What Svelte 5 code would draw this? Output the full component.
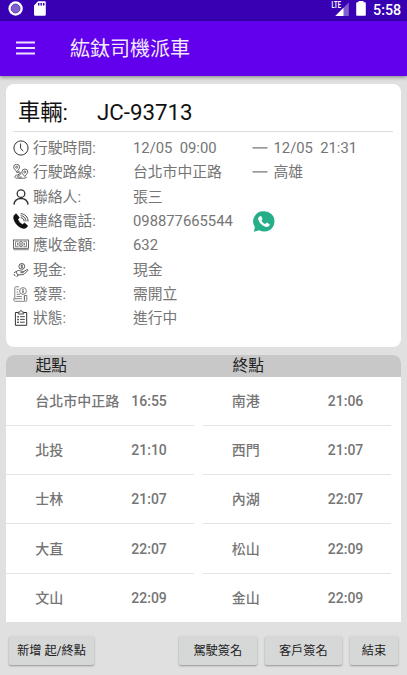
<script lang="ts">
  type Stop = { place: string; time: string };

  const details = [
    { icon: "clock", label: "行駛時間:", value: "12/05  09:00", to: "12/05  21:31" },
    { icon: "route", label: "行駛路線:", value: "台北市中正路", to: "高雄" },
    { icon: "person", label: "聯絡人:", value: "張三" },
    { icon: "phone", label: "連絡電話:", value: "098877665544", chat: true },
    { icon: "money", label: "應收金額:", value: "632" },
    { icon: "hand", label: "現金:", value: "現金" },
    { icon: "invoice", label: "發票:", value: "需開立" },
    { icon: "status", label: "狀態:", value: "進行中" },
  ];

  const starts: Stop[] = [
    { place: "台北市中正路", time: "16:55" },
    { place: "北投", time: "21:10" },
    { place: "士林", time: "21:07" },
    { place: "大直", time: "22:07" },
    { place: "文山", time: "22:09" },
  ];

  const ends: Stop[] = [
    { place: "南港", time: "21:06" },
    { place: "西門", time: "21:07" },
    { place: "內湖", time: "22:07" },
    { place: "松山", time: "22:09" },
    { place: "金山", time: "22:09" },
  ];
</script>

{#snippet stopList(stops: Stop[])}
  <ul class="stops">
    {#each stops as stop}
      <li><span class="place">{stop.place}</span><span>{stop.time}</span></li>
    {/each}
  </ul>
{/snippet}

<div class="screen">
  <div class="status-bar">
    <svg class="record" width="16" height="16" viewBox="0 0 16 16">
      <circle cx="7.600" cy="7.500" r="7.200" fill="#fff" />
      <circle cx="7.600" cy="7.500" r="4.400" fill="#8060cc" stroke="#5b35b8" stroke-width="1" />
    </svg>
    <svg class="sd" width="12" height="15" viewBox="0 0 12 15">
      <path d="M4 0.3h6.6a1.2 1.2 0 0 1 1.2 1.2v12a1.2 1.2 0 0 1-1.2 1.2H1.2A1.2 1.2 0 0 1 0 13.500V4.400z" fill="#fff" />
      <path d="M4.700 2v2.500M7.200 2v2.500M9.700 2v2.500" stroke="#3700b3" stroke-width="1.500" />
    </svg>
    <svg class="signal" width="19" height="16" viewBox="0 0 19 16">
      <path d="M17.800 1.500V15H4.300z" fill="#8060cc" />
      <path d="M12.500 6.800V15H4.300z" fill="#fff" />
      <text x="0.500" y="7" textLength="9.500" lengthAdjust="spacingAndGlyphs">LTE</text>
    </svg>
    <svg class="battery" width="10" height="15" viewBox="0 0 10 15">
      <path d="M2.500 0h5v1.300H9a.8.8 0 0 1 .8.8V14a.8.8 0 0 1-.8.8H1a.8.8 0 0 1-.8-.8V2.100a.8.8 0 0 1 .8-.8h1.500z" fill="#fff" />
    </svg>
    <span class="time">5:58</span>
  </div>

  <header>
    <svg width="19" height="14" viewBox="0 0 19 14" stroke="#ece0fd" stroke-width="1.900">
      <path d="M0 1.500h19M0 7h19M0 12.500h19" />
    </svg>
    <h1>紘鈦司機派車</h1>
  </header>

  <main>
    <section class="card trip">
      <h2><span>車輛:</span><span>JC-93713</span></h2>
      {#each details as d}
        <div class="detail">
          <svg class="icon" viewBox="0 0 16 16" fill="none" stroke="#333" stroke-width="1">
            {#if d.icon === "clock"}
              <circle cx="8" cy="8" r="7.100" />
              <path d="M7.600 3.500v4.700l2.600 3" />
            {:else if d.icon === "route"}
              <g stroke="#555" stroke-width="0.900">
                <path d="M3.700 7.800C1.800 5.300.7 4.500.7 3.200a2.900 2.900 0 0 1 5.900 0c0 1.300-1.100 2.100-2.900 4.600z" />
                <circle cx="3.700" cy="3.200" r="1" />
                <path d="M11.800 12.500C9.900 10 8.900 9.300 8.900 8a2.900 2.900 0 0 1 5.900 0c0 1.300-1.100 2-3 4.500z" />
                <circle cx="11.800" cy="8" r="1" />
                <path d="M3.300 8.300c3 .2 4.400 1 3 2-1.400.8-4.500.8-4.500 2.500 0 1.600 3 1.500 6.500 1.500 3 0 5.500-.2 5.300-1.500M4.800 7.500c3 .5 4 2 2 3.500-1.500 1-2.500 1-2.200 1.700.3.600 2.200.4 4.300.4" />
              </g>
            {:else if d.icon === "person"}
              <g stroke-width="1.300">
                <circle cx="8" cy="4.700" r="3.800" />
                <path d="M1 15.600c.4-4 3.100-6.100 7-6.100s6.600 2.100 7 6.100" />
              </g>
            {:else if d.icon === "phone"}
              <path d="M3.300.7C1.200 1.500.2 3.500.7 5.800c1.100 4.600 4.700 8.300 9 9.500 2.100.5 4.200-.4 5-2.500L11.600 10 9.500 11.400C7.500 10.700 5.600 8.400 4.900 6.500L6.300 4.500z" fill="#111" stroke="#111" stroke-width=".5" />
              <path d="M7.700 4.700c2 .2 3.300 1.500 3.500 3.600M7.700 2.700c3 .1 5.200 2.500 5.400 5.700M7.700.7c4.200.1 7.200 3.300 7.400 7.700" stroke-width=".9" />
            {:else if d.icon === "money"}
              <g stroke="#555">
                <rect x=".5" y="3" width="15" height="8.300" stroke-width=".9" />
                <path d="M2.500 4.700h3M10.500 4.700h3M2.500 9.700h3M10.500 9.700h3M2.500 4.700v5M13.500 4.700v5M4.500 6v2.500M11.500 6v2.500" stroke-width=".7" />
                <ellipse cx="8" cy="7.100" rx="2.100" ry="2.700" stroke-width=".8" />
                <path d="M8 5.500v3.300" />
                <path d="M.3 12.700h15.400" stroke="#888" />
              </g>
            {:else if d.icon === "hand"}
              <g stroke="#444" stroke-width=".9">
                <circle cx="8.800" cy="4.400" r="2.900" />
                <path d="M9.800 3.400c-.8-.6-2-.3-1.800.4.200.7 1.700.5 1.700 1.300 0 .7-1.300.8-1.900.2M8.800 2.600v3.700" stroke-width=".7" />
                <path d="M3 10c1.500-1.900 3.200-1.800 4.900-.9l2.200.2c.8.200.6 1.200-.2 1.300l-2.400.1M10.500 9.800l3.200-2.100c.9-.5 1.600.3 1 .9l-3.600 3.600c-.7.600-4.200.5-5.500.7L4.200 14" />
                <path d="M.9 11l1.900-1.300 2.400 3.600-1.700 1.300M.8 12l1.500 2.200" />
              </g>
            {:else if d.icon === "invoice"}
              <g stroke="#666" stroke-width=".8">
                <path d="M6 .8H2.900c-.9 0-1.100.5-1.100 1.300v10.700H.7c0 1.700.4 2.500 1.600 2.500h9.300M9 12.700h-7M11.300 9.500v4.300" />
                <circle cx="10" cy="5" r="3.400" />
                <path d="M10 2.800v4.300M9 3.900h1.500M9 6h2M3.600 3.400h2M3.600 6h1.700M3.600 8.300H7M3.600 10.500h5.200" />
                <path d="M11.500 9.500h2.300v5c0 1.200-2.300 1.200-2.300 0z" />
              </g>
            {:else}
              <path d="M5 2.500H2.400v12.800h11.300V2.500H11" />
              <path d="M5.300 4h5.400V2.100H9.200C9 .9 8.700.6 8 .6s-1 .3-1.200 1.500H5.300z" stroke-width=".9" />
              <path d="M4.300 6.700h1.500M4.300 9.400h1.500M4.300 12.200h1.500" stroke-width="1.500" />
              <path d="M7 6.700h4.800M7 9.400h4.800M7 12.200h4.800" stroke-width=".9" />
            {/if}
          </svg>
          <span class="label">{d.label}</span>
          <span class="value">{d.value}</span>
          {#if d.to}
            <svg class="dash" width="16" height="4" viewBox="0 0 16 4">
              <path d="M0.500 1.900h15" stroke="#757575" stroke-width="1.400" />
            </svg>
            <span class="to">{d.to}</span>
          {/if}
          {#if d.chat}
            <svg class="whatsapp" width="22" height="21" viewBox="0 0 22 21">
              <path d="M10.800.2A10.200 10.200 0 0 1 21.500 10.300 10.300 10.300 0 0 1 6.200 19.300L.8 20.800l1.100-4.700A10.200 10.200 0 0 1 10.800.2z" fill="#25ae88" />
              <path d="M6.300 5.400C4.900 6.500 4.900 8 5.600 9.500c1.500 3.500 4.500 5.900 8 6.400 1.600.1 2.900-.9 3.200-2.600l-3-1.700-1.600 1.500C10.300 12.300 9 10.900 8.500 9.400l1.100-1.500L8.100 5z" fill="#fff" />
            </svg>
          {/if}
        </div>
      {/each}
    </section>

    <section class="card table">
      <div class="table-head"><span>起點</span><span>終點</span></div>
      <div class="lists">
        {@render stopList(starts)}
        {@render stopList(ends)}
      </div>
    </section>
  </main>

  <footer>
    <button class="add">新增 起/終點</button>
    <button class="sign">駕駛簽名</button>
    <button class="sign">客戶簽名</button>
    <button class="finish">結束</button>
  </footer>
</div>

<style>
  :global(body) { background: #e0e0e0; }
  .screen {
    width: 407px;
    height: 675px;
    overflow: hidden;
    display: flex;
    flex-direction: column;
    background: #e0e0e0;
    font-family: Roboto, "Noto Sans CJK TC", sans-serif;
    color: #757575;
  }
  .status-bar {
    flex: none;
    height: 20.500px;
    box-sizing: border-box;
    padding: 1px 6px 0 8px;
    display: flex;
    align-items: flex-start;
    background: #3700b3;
    color: #fff;
  }
  .sd { margin-left: 10px; }
  .signal { margin-left: auto; }
  .signal text { font: 700 8.500px Roboto, sans-serif; fill: #fff; }
  .battery { margin: 0 7px 0 6px; }
  .time { font-size: 14.300px; font-weight: 500; line-height: 18px; width: 28px; white-space: nowrap; }
  header {
    flex: none;
    height: 55.500px;
    box-sizing: border-box;
    padding-left: 16px;
    display: flex;
    align-items: center;
    background: #6200ee;
    box-shadow: 0 1px 4px rgba(0, 0, 0, 0.45);
  }
  h1 {
    margin: 0 0 0 35px;
    padding-top: 2px;
    font-size: 20px;
    font-weight: 400;
    line-height: 28px;
    color: #f3eafe;
  }
  main { padding: 8px 6px 0; display: flex; flex-direction: column; gap: 8px; }
  .card { border-radius: 8px; background: #fff; overflow: hidden; }
  .trip { height: 263px; box-sizing: border-box; padding: 8px 8px 0 7px; }
  h2 {
    margin: 0 0 4px;
    height: 40px;
    box-sizing: border-box;
    border-bottom: 1px solid #dcdcdc;
    padding-left: 5px;
    display: grid;
    grid-template-columns: 79px 1fr;
    font-size: 22.300px;
    line-height: 40px;
    font-weight: 400;
    color: #111;
  }
  .detail {
    height: 24.330px;
    display: grid;
    grid-template-columns: 16px 4px 100px 118px 22px 1fr;
    align-items: center;
    font-size: 14.800px;
    line-height: 24px;
    white-space: pre;
  }
  .icon { width: 16px; height: 16px; }
  .label { grid-column: 3; }
  .dash { margin-left: 1px; }
  .whatsapp { margin-left: 1.500px; }
  .to { padding-left: 0.500px; }
  .table { height: 267px; border-radius: 8px 8px 0 0; }
  .table-head {
    height: 21.500px;
    padding-left: 29.500px;
    display: grid;
    grid-template-columns: 197px 1fr;
    background: #c8c8c8;
    color: #222;
    font-size: 15.700px;
    line-height: 21.500px;
  }
  .lists { display: grid; grid-template-columns: 187.500px 188px; column-gap: 9px; }
  .stops { margin: 0; padding: 0; list-style: none; font-size: 14px; font-weight: 500; }
  .stops li {
    height: 49.300px;
    box-sizing: border-box;
    border-bottom: 1px solid #e4e4e4;
    padding-left: 29.300px;
    display: grid;
    grid-template-columns: 96px 1fr;
    align-items: center;
  }
  .place { padding-bottom: 2px; }
  .stops li:last-child { border-bottom: none; }
  footer { padding: 14px 9px 0; display: flex; gap: 8px; }
  button {
    height: 29px;
    padding: 0 0 2px;
    border: none;
    border-radius: 2px;
    background: #d6d7d7;
    box-shadow: 0 1px 2px rgba(0, 0, 0, 0.35);
    font-family: inherit;
    font-size: 12.200px;
    color: #222;
  }
  .add { width: 85px; margin-right: auto; }
  .sign { width: 77.500px; }
  .finish { width: 48px; }
</style>
